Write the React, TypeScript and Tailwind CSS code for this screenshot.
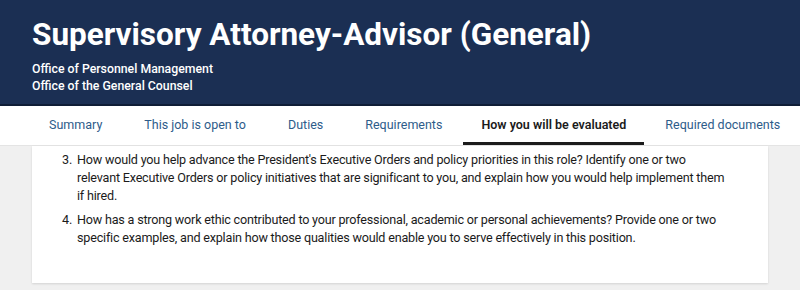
const tabs = [
  'Summary',
  'This job is open to',
  'Duties',
  'Requirements',
  'How you will be evaluated',
  'Required documents',
];

const questions = [
  {
    n: 3,
    text: "How would you help advance the President's Executive Orders and policy priorities in this role? Identify one or two relevant Executive Orders or policy initiatives that are significant to you, and explain how you would help implement them if hired.",
  },
  {
    n: 4,
    text: 'How has a strong work ethic contributed to your professional, academic or personal achievements? Provide one or two specific examples, and explain how those qualities would enable you to serve effectively in this position.',
  },
];

export default function App() {
  const active = 'How you will be evaluated';
  return (
    <div className="w-[800px] h-[290px] overflow-hidden bg-[#f0f0f0] font-['Roboto',sans-serif]">
      <header className="h-[106px] bg-[#1b2f53] border-b-[2px] border-[#0f1d36] px-8 pt-[15px] text-white">
        <h1 className="text-[31.5px] leading-[40px] font-bold">
          Supervisory Attorney-Advisor (General)
        </h1>
        <div className="mt-[6px] text-[12.3px] leading-[17px] font-medium">
          <p>Office of Personnel Management</p>
          <p>Office of the General Counsel</p>
        </div>
      </header>
      <nav className="h-[40px] bg-white border-b border-[#e4e4e4] flex pl-[28px] whitespace-nowrap">
        {tabs.map((t) => (
          <div
            key={t}
            className={
              t === active
                ? 'px-[18px] flex items-center border-b-[3px] border-[#1b1b1b] text-[#1b1b1b] font-semibold text-[12.5px] pt-[3px]'
                : 'px-[21px] flex items-center text-[#2e5c8a] text-[12.5px]'
            }
          >
            {t}
          </div>
        ))}
      </nav>
      <div className="px-8">
        <div className="bg-white h-[137px] shadow-[0_1px_2px_rgba(0,0,0,0.12)] pl-[30px] pr-[40px] pt-[5px]">
          <ol className="text-[12.6px] tracking-[-0.2px] leading-[18px] text-[#1b1b1b] space-y-[6px]">
            {questions.map((q) => (
              <li key={q.n} className="flex">
                <span className="w-[15px] shrink-0">{q.n}.</span>
                <span>{q.text}</span>
              </li>
            ))}
          </ol>
        </div>
      </div>
    </div>
  );
}
